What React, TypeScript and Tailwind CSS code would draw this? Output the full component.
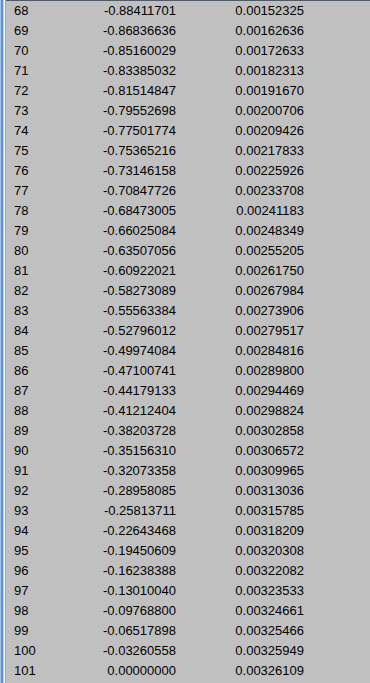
const rows: [string, string, string][] = [
  ["68", "-0.88411701", "0.00152325"],
  ["69", "-0.86836636", "0.00162636"],
  ["70", "-0.85160029", "0.00172633"],
  ["71", "-0.83385032", "0.00182313"],
  ["72", "-0.81514847", "0.00191670"],
  ["73", "-0.79552698", "0.00200706"],
  ["74", "-0.77501774", "0.00209426"],
  ["75", "-0.75365216", "0.00217833"],
  ["76", "-0.73146158", "0.00225926"],
  ["77", "-0.70847726", "0.00233708"],
  ["78", "-0.68473005", "0.00241183"],
  ["79", "-0.66025084", "0.00248349"],
  ["80", "-0.63507056", "0.00255205"],
  ["81", "-0.60922021", "0.00261750"],
  ["82", "-0.58273089", "0.00267984"],
  ["83", "-0.55563384", "0.00273906"],
  ["84", "-0.52796012", "0.00279517"],
  ["85", "-0.49974084", "0.00284816"],
  ["86", "-0.47100741", "0.00289800"],
  ["87", "-0.44179133", "0.00294469"],
  ["88", "-0.41212404", "0.00298824"],
  ["89", "-0.38203728", "0.00302858"],
  ["90", "-0.35156310", "0.00306572"],
  ["91", "-0.32073358", "0.00309965"],
  ["92", "-0.28958085", "0.00313036"],
  ["93", "-0.25813711", "0.00315785"],
  ["94", "-0.22643468", "0.00318209"],
  ["95", "-0.19450609", "0.00320308"],
  ["96", "-0.16238388", "0.00322082"],
  ["97", "-0.13010040", "0.00323533"],
  ["98", "-0.09768800", "0.00324661"],
  ["99", "-0.06517898", "0.00325466"],
  ["100", "-0.03260558", "0.00325949"],
  ["101", "0.00000000", "0.00326109"],
];

export default function App() {
  return (
    <div
      className="flex h-[683px] w-[370px] overflow-hidden bg-[#c0c0c0] text-[13px] text-black shadow-[inset_0_1px_0_#4f5a66]"
      style={{ fontFamily: '"Liberation Sans", Arial, sans-serif' }}
    >
      <div className="flex h-full shrink-0">
        <div className="w-px bg-[#a9c3e4]" />
        <div className="w-[2px] bg-[#5f90cf]" />
        <div className="w-px bg-[#bcd3ee]" />
        <div className="w-px bg-[#f4f4f4]" />
        <div className="w-px bg-[#a8a8a8]" />
      </div>
      <div className="flex flex-1 flex-col">
        {rows.map(([a, b, c]) => (
          <div key={a} className="flex h-[20px] shrink-0 items-center leading-none">
            <div className="w-[94px] pl-[8px]">{a}</div>
            <div className="w-[76px] text-right">{b}</div>
            <div className="w-[128px] text-right">{c}</div>
          </div>
        ))}
      </div>
    </div>
  );
}
